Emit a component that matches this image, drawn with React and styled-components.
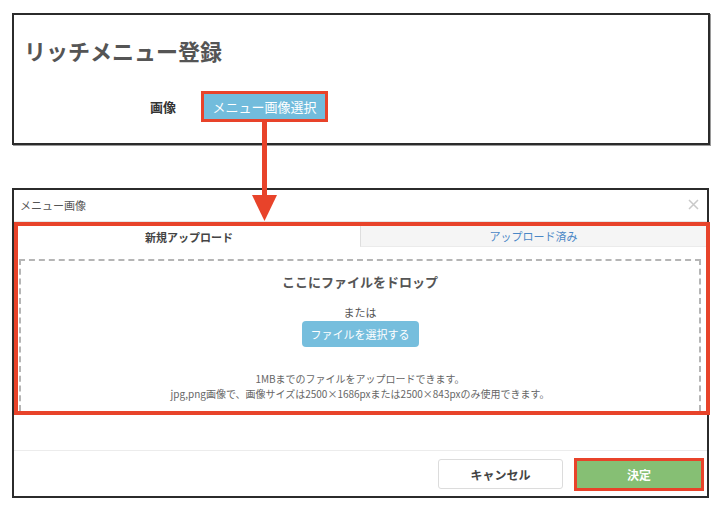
import React from 'react';
import styled, { createGlobalStyle } from 'styled-components';

const GlobalStyle = createGlobalStyle`
  body {
    margin: 0;
    background: #fff;
    font-family: "Noto Sans CJK JP", "Noto Sans", "Liberation Sans", sans-serif;
    color: #555;
  }
`;

const MARK = '#e8432a';

const App = () => {
    return (
        <Page>
            <GlobalStyle />
            <FormPanel>
                <Title>リッチメニュー登録</Title>
                <FieldRow>
                    <FieldLabel>画像</FieldLabel>
                    <PickButton>メニュー画像選択</PickButton>
                </FieldRow>
            </FormPanel>

            <Arrow width="26" height="100" viewBox="0 0 26 100">
                <rect x="10" y="0" width="5" height="76" fill={MARK} />
                <polygon points="0,73 25,73 12.5,99" fill={MARK} />
            </Arrow>

            <Modal>
                <ModalHeader>
                    <ModalTitle>メニュー画像</ModalTitle>
                    <CloseIcon width="11" height="11" viewBox="0 0 11 11">
                        <path d="M1 1 L10 10 M10 1 L1 10" stroke="#c9c9c9" strokeWidth="1.5" />
                    </CloseIcon>
                </ModalHeader>

                <Highlight>
                    <Tabs>
                        <Tab $active>新規アップロード</Tab>
                        <Tab>アップロード済み</Tab>
                    </Tabs>
                    <DropZone>
                        <DropTitle>ここにファイルをドロップ</DropTitle>
                        <OrText>または</OrText>
                        <FileButton>ファイルを選択する</FileButton>
                        <Notes>
                            <p>1MBまでのファイルをアップロードできます。</p>
                            <p>jpg,png画像で、画像サイズは2500×1686pxまたは2500×843pxのみ使用できます。</p>
                        </Notes>
                    </DropZone>
                </Highlight>

                <ModalFooter>
                    <CancelButton>キャンセル</CancelButton>
                    <SubmitButton>決定</SubmitButton>
                </ModalFooter>
            </Modal>
        </Page>
    );
};

const Page = styled.div`
  position: relative;
  display: flex;
  flex-direction: column;
  padding: 13px 13px 0 12px;
  gap: 43px;
`;

const FormPanel = styled.section`
  width: 698px;
  height: 132px;
  box-sizing: border-box;
  border: 2px solid #2b2b2b;
  box-shadow: 1px 1px 0 #9a9a9a;
  padding: 22px 0 0 10px;
`;

const Title = styled.h1`
  margin: 0;
  font-size: 22px;
  line-height: 26px;
  font-weight: 700;
  color: #555;
`;

const FieldRow = styled.div`
  display: flex;
  align-items: center;
  gap: 28px;
  margin-top: 31px;
  padding-left: 126px;
`;

const FieldLabel = styled.span`
  font-size: 13px;
  font-weight: 700;
  color: #333;
`;

const PickButton = styled.button`
  width: 121px;
  height: 25px;
  padding: 0;
  border: none;
  background: #72bcdc;
  color: #fff;
  font-family: inherit;
  font-size: 13px;
  outline: 3px solid ${MARK};
`;

const Arrow = styled.svg`
  position: absolute;
  left: 252px;
  top: 122px;
`;

const Modal = styled.section`
  width: 697px;
  height: 310px;
  box-sizing: border-box;
  border: 2px solid #2b2b2b;
  display: flex;
  flex-direction: column;
`;

const ModalHeader = styled.header`
  height: 32px;
  box-sizing: border-box;
  border-bottom: 1px solid #e6e6e6;
  display: flex;
  align-items: center;
  justify-content: space-between;
  padding: 0 8px 2px 6px;
`;

const ModalTitle = styled.h2`
  margin: 0;
  font-size: 11px;
  font-weight: 400;
  color: #555;
`;

const CloseIcon = styled.svg`
  display: block;
`;

const Highlight = styled.div`
  margin-right: -3px;
  border: 4px solid ${MARK};
  display: flex;
  flex-direction: column;
  gap: 12px;
`;

const Tabs = styled.div`
  display: grid;
  grid-template-columns: 342px 1fr;
  height: 21px;
`;

const Tab = styled.div`
  display: flex;
  align-items: center;
  justify-content: center;
  font-size: 11px;
  font-weight: ${(p) => (p.$active ? 700 : 400)};
  color: ${(p) => (p.$active ? '#444' : '#4a87c6')};
  background: ${(p) => (p.$active ? '#fff' : '#f5f5f5')};
  border-left: ${(p) => (p.$active ? 'none' : '1px solid #dedede')};
  border-bottom: ${(p) => (p.$active ? 'none' : '1px solid #ebebeb')};
`;

const DropZone = styled.div`
  margin: 0 5px 0 1px;
  height: 152px;
  box-sizing: border-box;
  border: 2px dashed #b5b5b5;
  border-bottom: none;
  display: flex;
  flex-direction: column;
  align-items: center;
  padding-top: 12px;
`;

const DropTitle = styled.div`
  font-size: 13px;
  font-weight: 700;
  color: #555;
  line-height: 18px;
`;

const OrText = styled.div`
  margin-top: 14px;
  font-size: 11px;
  color: #555;
  line-height: 14px;
`;

const FileButton = styled.button`
  margin-top: 2px;
  width: 117px;
  height: 26px;
  padding: 0;
  border: none;
  border-radius: 4px;
  background: #76bedd;
  color: #fff;
  font-family: inherit;
  font-size: 11px;
`;

const Notes = styled.div`
  margin-top: 24px;
  text-align: center;
  font-size: 10px;
  line-height: 15px;
  color: #666;

  p {
    margin: 0;
  }
`;

const ModalFooter = styled.footer`
  margin-top: auto;
  height: 46px;
  box-sizing: border-box;
  border-top: 1px solid #ececec;
  display: flex;
  align-items: center;
  justify-content: flex-end;
  gap: 14px;
  padding: 1px 6px 0 0;
`;

const CancelButton = styled.button`
  width: 125px;
  height: 30px;
  border: 1px solid #dcdcdc;
  border-radius: 3px;
  background: #fff;
  color: #444;
  font-family: inherit;
  font-size: 12px;
  font-weight: 700;
`;

const SubmitButton = styled.button`
  width: 124px;
  height: 27px;
  border: none;
  background: #86bf74;
  color: #fff;
  font-family: inherit;
  font-size: 12px;
  font-weight: 700;
  outline: 3px solid ${MARK};
`;

export default App;
